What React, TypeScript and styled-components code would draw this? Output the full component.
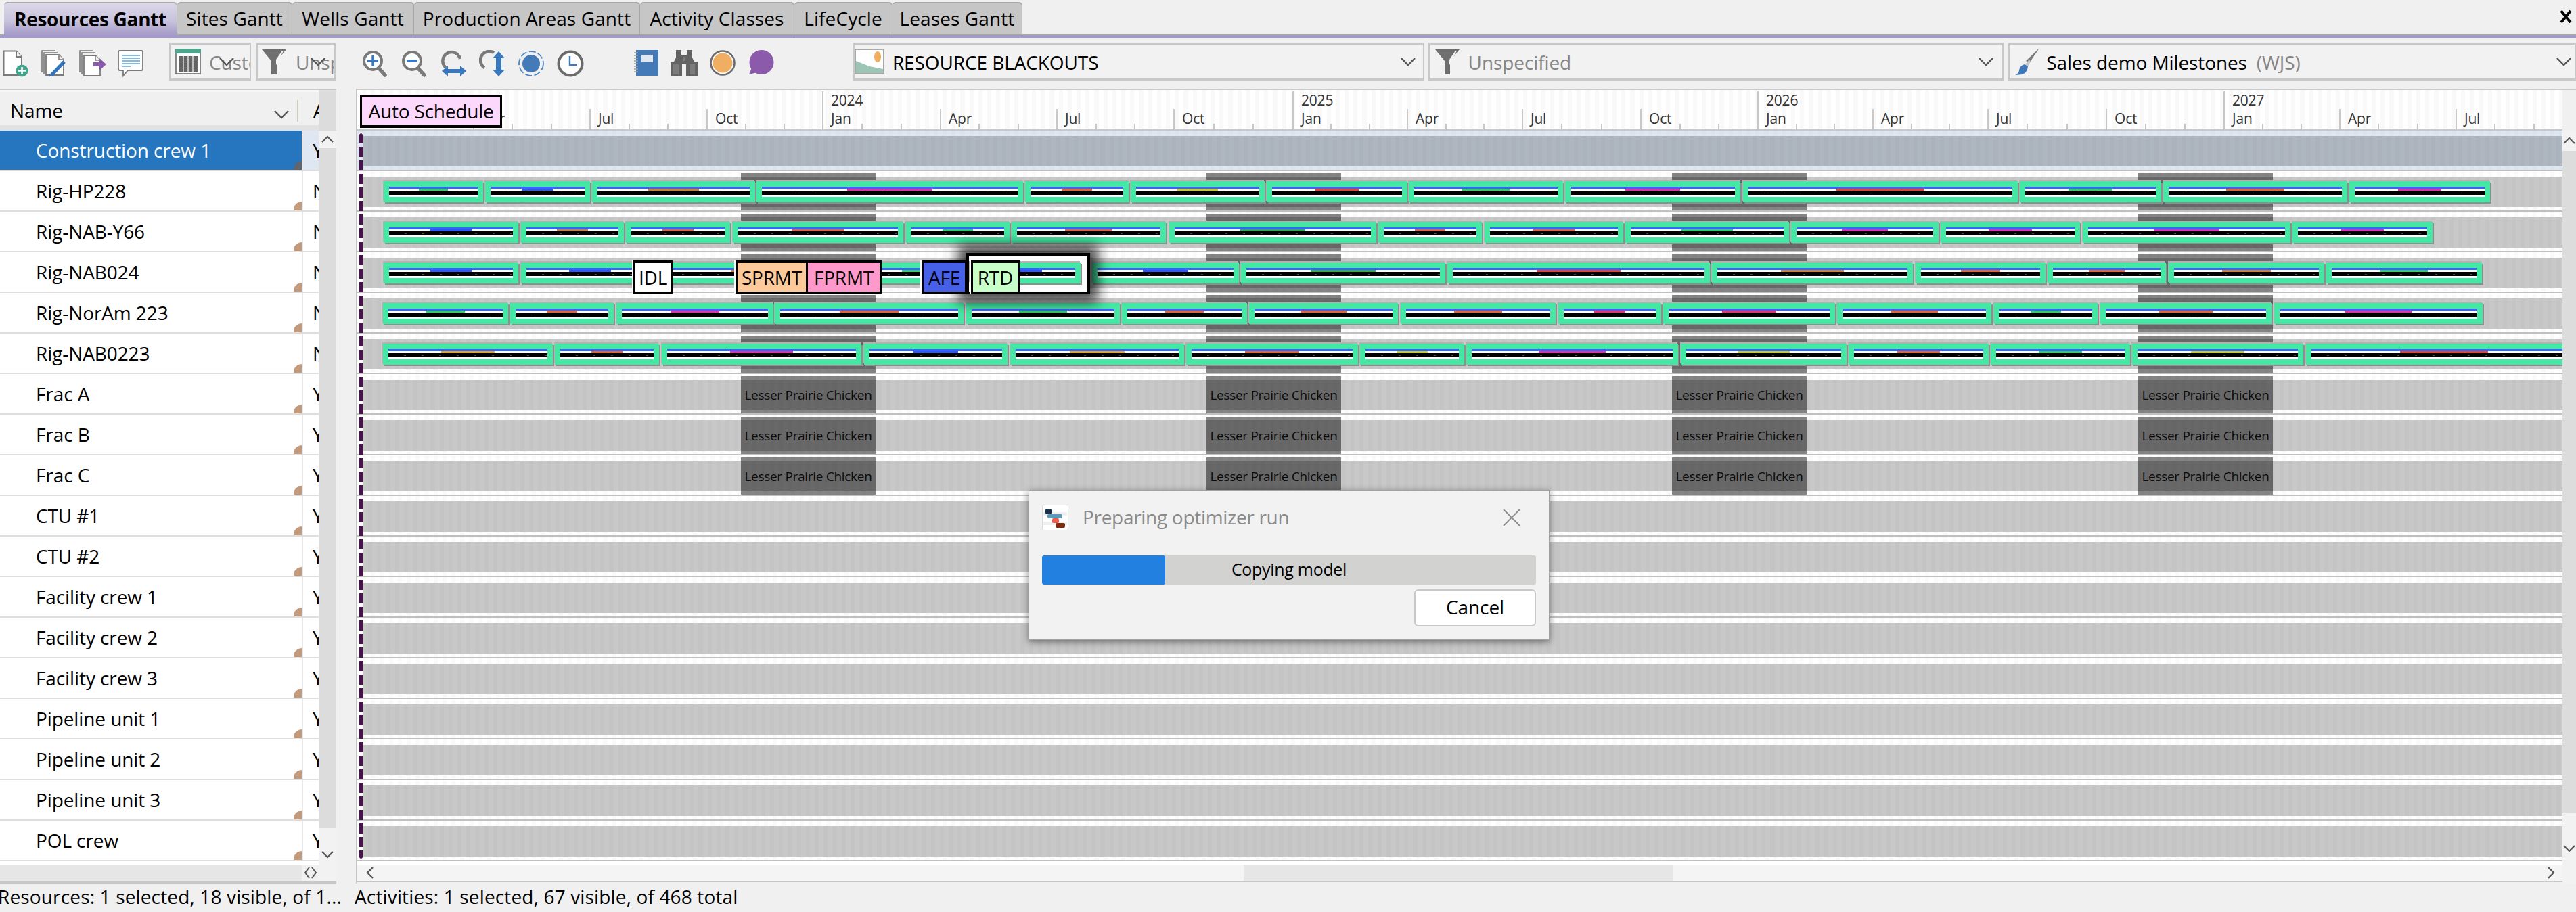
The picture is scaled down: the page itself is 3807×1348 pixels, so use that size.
import React from 'react';
import styled, { createGlobalStyle } from 'styled-components';

const Global = createGlobalStyle`
  html, body { margin: 0; padding: 0; background: #f0f0f0; overflow: hidden; }
  * { box-sizing: border-box; }
`;

const FONT = `"Open Sans", "Noto Sans", "Liberation Sans", sans-serif`;
const X0 = 528;

const Page = styled.div`
  position: relative;
  width: 3807px;
  height: 1348px;
  overflow: hidden;
  background: #f0f0f0;
  font-family: ${FONT};
  font-size: 28px;
  letter-spacing: -0.1px;
  color: #000;
  display: flex;
  flex-direction: column;
`;

/* ---------- tabs ---------- */
const TabBar = styled.div`
  height: 56px;
  padding: 3px 0 0 6px;
  display: flex;
  gap: 1px;
  align-items: flex-start;
  border-bottom: 4px solid #a49ac9;
  box-shadow: inset 0 -2px 0 #a8a8a8;
  position: relative;
`;
const Tab = styled.div<{ $w: number; $active?: boolean }>`
  width: ${p => p.$w}px;
  height: ${p => (p.$active ? 49 : 47)}px;
  border-radius: 5px 5px 0 0;
  border-top: 2px solid #a8a8a8;
  background: ${p => (p.$active ? 'linear-gradient(#dcd8e8 0%, #c8c3dc 55%, #a49ac9 100%)' : '#c6c6c6')};
  font-weight: ${p => (p.$active ? 700 : 400)};
  letter-spacing: ${p => (p.$active ? '-0.3px' : '0.1px')};
  display: flex;
  align-items: center;
  justify-content: center;
  white-space: nowrap;
  box-shadow: 1px 0 0 #a8a8a8;
  padding-bottom: 2px;
`;
const CloseAll = styled.svg`
  position: absolute;
  right: 6px;
  top: 15px;
  width: 18px;
  height: 19px;
`;

/* ---------- toolbar ---------- */
const Toolbar = styled.div`
  height: 75px;
  display: flex;
  align-items: flex-start;
  background: #f0f0f0;
`;
const Tool = styled.div<{ $ml: number }>`
  margin: 18px 0 0 ${p => p.$ml}px;
  height: 40px;
  display: flex;
`;
const Combo = styled.div<{ $ml: number; $w: number }>`
  position: relative;
  margin: 7px 0 0 ${p => p.$ml}px;
  width: ${p => p.$w}px;
  height: 57px;
  border: solid #c8c8c8;
  border-width: 3px 2px 4px 3px;
  display: flex;
  align-items: center;
  overflow: hidden;
  white-space: nowrap;
  background: #f2f2f2;
`;
const ComboIcon = styled.div<{ $ml: number }>`
  margin-left: ${p => p.$ml}px;
  display: flex;
  flex: none;
`;
const ComboText = styled.span<{ $ml: number; $muted?: boolean }>`
  margin-left: ${p => p.$ml}px;
  color: ${p => (p.$muted ? '#858585' : '#000')};
  padding-top: 2px;
`;
const ComboChevron = styled.svg<{ $right: number; $top?: number }>`
  position: absolute;
  right: ${p => p.$right}px;
  top: ${p => p.$top ?? 18}px;
  width: 24px;
  height: 14px;
`;

/* ---------- main ---------- */
const Main = styled.div`
  height: 1175px;
  display: grid;
  grid-template-columns: 497px 29px 1fr;
`;
const LeftPanel = styled.div`
  display: grid;
  grid-template-columns: 471px 26px;
  border-top: 2px solid #c8c8c8;
  border-bottom: 4px solid #c8c8c8;
  background: #fff;
`;
const LeftBody = styled.div`
  display: flex;
  flex-direction: column;
`;
const HeaderRow = styled.div`
  position: relative;
  height: 60px;
  flex: none;
  background: #f0f0f0;
  border-top: 3px solid #f8f8f8;
  border-bottom: 8px solid #e2e2e2;
  display: flex;
  align-items: center;
`;
const HeaderName = styled.span`
  margin-left: 15px;
  width: 389px;
  padding-top: 4px;
`;
const HeaderSep = styled.div`
  width: 2px;
  height: 32px;
  margin: 6px 0 0 37px;
  background: #cfcbc0;
`;
const HeaderClip = styled.span`
  margin-left: 22px;
  width: 8px;
  overflow: hidden;
  padding-top: 4px;
`;
const HeaderChevron = styled.svg`
  position: absolute;
  left: 404px;
  top: 26px;
  width: 24px;
  height: 14px;
`;
const NameRow = styled.div`
  height: 60px;
  flex: none;
  display: grid;
  grid-template-columns: 446px 2px 23px;
  border-bottom: 2px solid #dedede;
`;
const NameCell = styled.div<{ $sel?: boolean }>`
  position: relative;
  display: flex;
  align-items: center;
  padding-left: 53px;
  color: ${p => (p.$sel ? '#fff' : '#000')};
  background: ${p => (p.$sel ? '#2675bf' : '#fff')};
`;
const Corner = styled.i<{ $sel?: boolean }>`
  position: absolute;
  right: 0;
  bottom: 0;
  width: 12px;
  height: 13px;
  border-radius: 12px 0 0 0;
  background: ${p => (p.$sel ? '#5f6670' : '#c49a7c')};
`;
const ColRule = styled.div`
  background: #e8e8e8;
`;
const FlagCell = styled.div<{ $sel?: boolean }>`
  display: flex;
  align-items: center;
  overflow: hidden;
  padding-left: 14px;
  background: ${p => (p.$sel ? '#dfe8f2' : '#fff')};
`;
const LeftSpacer = styled.div`
  height: 5px;
  flex: none;
`;
const LeftFooter = styled.div`
  height: 24px;
  flex: none;
  display: flex;
  justify-content: flex-end;
  background: #e6e6e6;
`;
const FooterArrows = styled.div`
  width: 25px;
  background: #f0f0f0;
  display: flex;
  align-items: center;
  justify-content: center;
`;

const VScroll = styled.div`
  display: flex;
  flex-direction: column;
  background: #f2f2f2;
`;
const VHead = styled.div<{ $bg: string }>`
  height: 60px;
  flex: none;
  background: ${p => p.$bg};
`;
const VBtn = styled.div<{ $h: number }>`
  height: ${p => p.$h}px;
  flex: none;
  display: flex;
  align-items: center;
  justify-content: center;
  background: #f2f2f2;
`;
const VThumb = styled.div`
  flex: 1;
  background: #dcdcdc;
`;

const Gap = styled.div`
  background: #f0f0f0;
`;

const RightPanel = styled.div`
  display: grid;
  grid-template-columns: 1fr 20px;
  border-left: 2px solid #c8c8c8;
  border-top: 2px solid #c8c8c8;
`;
const ChartCol = styled.div`
  display: flex;
  flex-direction: column;
  min-width: 0;
`;
const Timeline = styled.div`
  position: relative;
  height: 60px;
  flex: none;
  background: #fff repeating-linear-gradient(90deg, transparent 0 7px, rgba(0, 0, 0, 0.025) 7px 13.2px);
  border-bottom: 2px solid #c8c8c8;
  overflow: hidden;
`;
const Tick = styled.i<{ $k: 'y' | 'q' | 'm' }>`
  position: absolute;
  width: 2px;
  background: #c8c8c8;
  bottom: 0;
  height: ${p => (p.$k === 'y' ? 56 : p.$k === 'q' ? 30 : 8)}px;
`;
const TimeLabel = styled.span<{ $year?: boolean }>`
  position: absolute;
  top: ${p => (p.$year ? 0 : 27)}px;
  font-size: 21px;
  line-height: 30px;
  letter-spacing: -0.2px;
  color: #333;
`;
const AutoBtn = styled.div`
  position: absolute;
  left: ${532 - X0}px;
  top: 7px;
  width: 210px;
  height: 49px;
  border: 3px solid #000;
  border-bottom-width: 4px;
  background: #fcd9fc;
  display: flex;
  align-items: center;
  justify-content: center;
  letter-spacing: -0.2px;
  white-space: nowrap;
  z-index: 5;
`;

const Canvas = styled.div`
  position: relative;
  height: 1080px;
  flex: none;
  overflow: hidden;
  background: #fff;
`;
const GanttRow = styled.div<{ $sel?: boolean }>`
  position: relative;
  height: 60px;
  background: ${p => (p.$sel ? '#dfe8f2' : '#fff')}
    repeating-linear-gradient(90deg, transparent 0 7px, rgba(0, 0, 0, 0.02) 7px 13.2px);
  border-bottom: 2px solid #c0c0c0;
`;
const Band = styled.div<{ $sel?: boolean }>`
  position: absolute;
  left: 9px;
  right: 0;
  top: 8px;
  height: 45px;
  background: ${p => (p.$sel ? '#aeb6c0' : '#c8c8c8')}
    repeating-linear-gradient(90deg, transparent 0 7px, rgba(0, 0, 0, 0.018) 7px 13.2px);
`;
const Blackout = styled.div`
  position: absolute;
  top: 3px;
  height: 55px;
  background: rgba(0, 0, 0, 0.48);
  display: flex;
  align-items: center;
  justify-content: center;
  font-size: 19px;
  letter-spacing: -0.3px;
  color: #0a0a0a;
  white-space: nowrap;
`;
const Bar = styled.div<{ $top?: boolean }>`
  position: absolute;
  top: 15px;
  height: 31px;
  padding: 8px 8px 0;
  background: #44e8a4;
  box-shadow: -1px -2px 0 #b2b2b2, 2px 2px 0 #8e8e8e;
  z-index: ${p => (p.$top ? 3 : 'auto')};
`;
const BlueStrip = styled.div`
  height: 3px;
  background: #3366ff;
`;
const MidStrip = styled.div<{ $c: string }>`
  height: 3px;
  background: linear-gradient(90deg, #fff 33.3%, ${p => p.$c} 33.3%, ${p => p.$c} 66.7%, #fff 66.7%);
`;
const BlackStrip = styled.div`
  height: 6px;
  background: repeating-linear-gradient(90deg, transparent 0 23px, #46523f 23px 26px) 0 3px / 100% 1px no-repeat, #000;
`;
const WhiteStrip = styled.div`
  height: 3px;
  background: #fff;
`;
const Milestone = styled.div<{ $bg: string; $plain?: boolean }>`
  position: absolute;
  top: 12px;
  height: 49px;
  border: 3px solid #000;
  background: ${p => p.$bg};
  box-shadow: ${p => (p.$plain ? 'none' : '-2px 0 0 #fff')};
  display: flex;
  align-items: center;
  justify-content: center;
  z-index: 4;
  white-space: nowrap;
  letter-spacing: -0.2px;
`;
const SelectBox = styled.div`
  position: absolute;
  top: 1px;
  height: 61px;
  background: rgba(255, 255, 255, 0.93);
  border: 4px solid #000;
  box-shadow: 0 0 18px 12px rgba(0, 0, 0, 0.72);
  z-index: 2;
`;
const TodayLine = styled.div`
  position: absolute;
  left: 3px;
  top: 4px;
  bottom: 4px;
  width: 5px;
  background: repeating-linear-gradient(#4b1050 0 15px, transparent 15px 20px);
  outline: 1px solid rgba(255, 255, 255, 0.6);
  border-radius: 3px;
  z-index: 6;
`;
const CanvasEnd = styled.div`
  height: 5px;
  flex: none;
  background: #fff;
`;
const HScroll = styled.div`
  position: relative;
  height: 24px;
  flex: none;
  background: #f4f4f4;
  border-bottom: 0;
`;
const HThumb = styled.div`
  position: absolute;
  left: ${1838 - X0}px;
  width: 634px;
  top: 0;
  bottom: 0;
  background: #e6e6e6;
`;
const HArrow = styled.svg<{ $right?: boolean }>`
  position: absolute;
  top: 3px;
  width: 12px;
  height: 18px;
  ${p => (p.$right ? 'right: 11px;' : 'left: 13px;')}
`;
const HRule = styled.div`
  height: 2px;
  flex: none;
  background: #c8c8c8;
`;

const StatusBar = styled.div`
  flex: 1;
  display: grid;
  grid-template-columns: 527px 1fr;
  align-items: center;
  padding-bottom: 4px;
  letter-spacing: 0.15px;
`;
const StatusText = styled.div`
  white-space: nowrap;
  overflow: hidden;
  margin-left: -3px;
`;

/* ---------- dialog ---------- */
const Dialog = styled.div`
  position: absolute;
  left: 1520px;
  top: 724px;
  width: 770px;
  height: 222px;
  background: #f2f2f2;
  border: 1px solid #a0a0a0;
  box-shadow: 0 3px 10px rgba(0, 0, 0, 0.45);
  padding: 20px 19px 0;
  z-index: 10;
  display: flex;
  flex-direction: column;
`;
const DialogHead = styled.div`
  display: flex;
  align-items: center;
  height: 40px;
`;
const DialogTitle = styled.span`
  flex: 1;
  margin-left: 21px;
  color: #8a8a8a;
  letter-spacing: -0.3px;
  padding-bottom: 2px;
`;
const DialogClose = styled.svg`
  width: 30px;
  height: 30px;
  margin-right: 21px;
`;
const Progress = styled.div`
  position: relative;
  margin-top: 36px;
  height: 43px;
  border-radius: 3px;
  background: #d2d2d0;
  display: flex;
  align-items: center;
  justify-content: center;
  font-size: 25px;
  letter-spacing: -0.3px;
  padding-bottom: 3px;
  overflow: hidden;
`;
const ProgressFill = styled.div`
  position: absolute;
  left: 0;
  top: 0;
  bottom: 0;
  width: 182px;
  background: #2180e0;
  border-radius: 3px;
`;
const ProgressText = styled.span`
  position: relative;
`;
const DialogFoot = styled.div`
  display: flex;
  justify-content: flex-end;
  margin-top: 7px;
`;
const CancelBtn = styled.div`
  width: 180px;
  height: 55px;
  background: #fff;
  border: 2px solid #c8c8c8;
  border-radius: 6px;
  display: flex;
  align-items: center;
  justify-content: center;
  padding-bottom: 3px;
`;

/* ---------- icons ---------- */
const G = '#7a7a7a';

const Chevron = () => <polyline points="2,2 12,12 22,2" fill="none" stroke="#555" strokeWidth="2.4" />;

const IconNew = () => (
  <svg width="38" height="40" viewBox="0 0 38 40">
    <path d="M1.5 1.5H20L28 10V37H1.5Z" fill="#fff" stroke={G} strokeWidth="2" />
    <path d="M20 1.5V10H28" fill="#f0f0f0" stroke={G} strokeWidth="2" />
    <circle cx="28.5" cy="30.5" r="9" fill="#3fa58a" />
    <path d="M28.5 25V36M23 30.5H34" stroke="#fff" strokeWidth="2.6" />
  </svg>
);
const IconEdit = () => (
  <svg width="38" height="40" viewBox="0 0 38 40">
    <path d="M1 33V1H21" fill="none" stroke={G} strokeWidth="1.6" />
    <path d="M4 36V4H24" fill="none" stroke={G} strokeWidth="1.6" />
    <path d="M7 37V7H26L33 14V37Z" fill="#fff" stroke={G} strokeWidth="1.8" />
    <path d="M26 7V14H33" fill="#eee" stroke={G} strokeWidth="1.6" />
    <path d="M34 17L15 37" stroke="#2e75c0" strokeWidth="5" />
    <path d="M15 37L11 40L12 36Z" fill="#2e75c0" />
  </svg>
);
const IconSend = () => (
  <svg width="40" height="40" viewBox="0 0 40 40">
    <path d="M1 33V1H20" fill="none" stroke={G} strokeWidth="1.6" />
    <path d="M4 36V4H23" fill="none" stroke={G} strokeWidth="1.6" />
    <path d="M7 38V8H24L31 15V38Z" fill="#fff" stroke={G} strokeWidth="1.8" />
    <path d="M24 8V15H31" fill="#eee" stroke={G} strokeWidth="1.6" />
    <path d="M21 18H30V12L40 21L30 30V24H21Z" fill="#8a5aa8" />
  </svg>
);
const IconComment = () => (
  <svg width="38" height="40" viewBox="0 0 38 40">
    <path d="M3 1H35Q37 1 37 3V28Q37 30 35 30H15L8 38V30H3Q1 30 1 28V3Q1 1 3 1Z" fill="#fff" stroke={G} strokeWidth="1.8" />
    <path d="M6 8H33M6 12H33M6 16H33M6 20H33M6 24H19" stroke="#5ba5d8" strokeWidth="1.7" />
  </svg>
);
const IconTable = () => (
  <svg width="38" height="38" viewBox="0 0 38 38">
    <rect x="1" y="1" width="36" height="36" fill="#fff" stroke={G} strokeWidth="1.8" />
    <rect x="0" y="0" width="38" height="7" fill="#4fa58c" />
    <path d="M5 12H33M5 15H33M5 18H33M5 21H33M5 24H33M5 27H33M5 30H33M5 33H33" stroke="#333" strokeWidth="1.4" />
    <path d="M12 10V34M19 10V34M26 10V34" stroke="#fff" strokeWidth="1.2" />
  </svg>
);
const IconFunnel = () => (
  <svg width="36" height="38" viewBox="0 0 36 38">
    <path d="M0 1H36L22 18V38H14V18Z" fill="#6f6f6f" />
    <path d="M30 3L21 16V24L32 3Z" fill="#f4f4f4" />
  </svg>
);
const Lens = ({ inner }: { inner: React.ReactNode }) => (
  <svg width="37" height="40" viewBox="0 0 37 40">
    <circle cx="15" cy="16" r="13" fill="#fff" stroke={G} strokeWidth="4" />
    <path d="M24 27L33 37" stroke={G} strokeWidth="5.5" strokeLinecap="round" />
    {inner}
  </svg>
);
const IconFitH = () => (
  <svg width="40" height="40" viewBox="0 0 40 40">
    <path d="M8 26A13 13 0 1 1 29 13" fill="none" stroke={G} strokeWidth="4.5" />
    <path d="M2 31L11 23V28H29V23L38 31L29 39V34H11V39Z" fill="#3a78bd" />
  </svg>
);
const IconFitV = () => (
  <svg width="40" height="40" viewBox="0 0 40 40">
    <path d="M8 26A13 13 0 1 1 22 4" fill="none" stroke={G} strokeWidth="4.5" />
    <path d="M29 2L38 12H33V29H38L29 39L20 29H25V12H20Z" fill="#3a78bd" />
  </svg>
);
const IconTarget = () => (
  <svg width="40" height="40" viewBox="0 0 40 40">
    <circle cx="20" cy="20" r="18" fill="none" stroke="#4a86c0" strokeWidth="1.8" strokeDasharray="10 3.5" />
    <circle cx="20" cy="20" r="13" fill="#457ab8" />
  </svg>
);
const IconClock = () => (
  <svg width="40" height="40" viewBox="0 0 40 40">
    <circle cx="20" cy="20" r="17.5" fill="#fff" stroke="#6a6a6a" strokeWidth="4" />
    <path d="M19 9V22H30" fill="none" stroke="#3f78b8" strokeWidth="2.4" />
  </svg>
);
const IconNotebook = () => (
  <svg width="36" height="38" viewBox="0 0 36 38">
    <rect x="3" y="0" width="33" height="38" fill="#457ab8" />
    <rect x="11" y="7" width="17" height="11" fill="#dfe8f2" />
    <path d="M0 4H6M0 8H6M0 12H6M0 16H6M0 20H6M0 24H6M0 28H6M0 32H6" stroke="#9a9a9a" strokeWidth="1.6" />
  </svg>
);
const IconBinoculars = () => (
  <svg width="40" height="38" viewBox="0 0 40 38">
    <path d="M8 0H16V7H24V0H32V11L35 17H40V38H23V21H17V38H0V17H5L8 11Z" fill="#636363" />
    <path d="M4 21H12V36H4ZM28 21H36V36H28ZM18 10H22V16H18Z" fill="#7c7c7c" />
  </svg>
);
const IconOrange = () => (
  <svg width="38" height="38" viewBox="0 0 38 38">
    <circle cx="19" cy="19" r="17.5" fill="#fff" stroke="#6a6a6a" strokeWidth="2.6" />
    <circle cx="19" cy="19" r="14.5" fill="#f0ae62" />
  </svg>
);
const IconBubble = () => (
  <svg width="40" height="38" viewBox="0 0 40 38">
    <circle cx="20.5" cy="18" r="18" fill="#8c5aaa" />
    <path d="M2 36L6 26L14 33Z" fill="#8c5aaa" />
  </svg>
);
const IconPicture = () => (
  <svg width="44" height="38" viewBox="0 0 44 38">
    <rect x="1" y="1" width="42" height="36" fill="#fff" stroke="#a8a8a8" strokeWidth="2" />
    <ellipse cx="34" cy="12" rx="5" ry="8" fill="#f0ae62" />
    <path d="M2 18L22 26L42 30V36H2Z" fill="#9cc5b6" />
  </svg>
);
const IconBrush = () => (
  <svg width="38" height="40" viewBox="0 0 38 40">
    <path d="M37 0L22 22L17 19Z" fill="#7a7a7a" />
    <path d="M22 17L16 24L20 27L24 20Z" fill="#c8c8c8" />
    <path d="M15 24L20 27Q19 36 12 39L1 40Q7 38 7 33Q8 26 15 24Z" fill="#3f78b8" />
  </svg>
);
const IconGanttApp = () => (
  <svg width="39" height="38" viewBox="0 0 39 38">
    <rect x="0.5" y="0.5" width="38" height="37" rx="2" fill="#fff" stroke="#dcdcdc" />
    <rect x="2" y="11" width="35" height="5" fill="#f0f0f0" />
    <rect x="2" y="25" width="35" height="5" fill="#f0f0f0" />
    <rect x="4" y="7" width="11" height="6" rx="2" fill="#14304c" />
    <rect x="8" y="14" width="22" height="6" rx="2" fill="#5b9ab8" />
    <rect x="15" y="20" width="10" height="7" rx="2" fill="#ef5a4c" />
    <rect x="20" y="27" width="14" height="7" rx="2" fill="#7e2a0e" />
  </svg>
);

/* ---------- data ---------- */
const C = {
  green: '#33cc66', dkgreen: '#33aa44', blue: '#3355e8', orange: '#cc8033', ored: '#e0663a',
  magenta: '#dd33aa', olive: '#c4cc33', red: '#e04433', crimson: '#e6336a', gold: '#dda533',
};
type B3 = [number, number, string];

const barsByRow: Record<number, B3[]> = {
  1: [
    [567, 714, C.green], [717, 872, C.blue], [875, 1116, C.orange], [1118, 1512, C.magenta], [1515, 1668, C.ored],
    [1671, 1869, C.olive], [1872, 2080, C.red], [2082, 2310, C.green], [2313, 2572, C.magenta], [2576, 2982, C.red],
    [2985, 3194, C.green], [3197, 3469, C.ored], [3472, 3680, C.magenta],
  ],
  2: [
    [567, 766, C.blue], [770, 922, C.orange], [925, 1079, C.ored], [1083, 1335, C.ored], [1339, 1492, C.green],
    [1495, 1723, C.ored], [1728, 2034, C.dkgreen], [2037, 2190, C.ored], [2194, 2399, C.ored], [2402, 2644, C.green],
    [2647, 2865, C.magenta], [2868, 3074, C.magenta], [3078, 3385, C.magenta], [3388, 3595, C.magenta],
  ],
  3: [
    [567, 766, C.blue], [770, 974, C.blue], [977, 1278, C.orange], [1281, 1428, C.green],
    [1614, 1831, C.blue], [1834, 2136, C.dkgreen], [2139, 2527, C.red], [2530, 2827, C.orange],
    [2831, 3023, C.ored], [3026, 3201, C.ored], [3205, 3435, C.orange], [3438, 3668, C.green],
  ],
  4: [
    [566, 751, C.green], [754, 907, C.ored], [911, 1143, C.magenta], [1145, 1424, C.ored], [1428, 1655, C.green],
    [1658, 1843, C.ored], [1846, 2066, C.ored], [2070, 2299, C.ored], [2303, 2455, C.crimson], [2458, 2712, C.crimson],
    [2715, 2943, C.ored], [2947, 3100, C.green], [3104, 3357, C.ored], [3361, 3669, C.magenta],
  ],
  5: [
    [566, 817, C.gold], [820, 974, C.ored], [978, 1273, C.magenta], [1277, 1489, C.blue], [1493, 1750, C.gold],
    [1753, 2007, C.ored], [2010, 2164, C.olive], [2167, 2480, C.magenta], [2484, 2729, C.olive], [2732, 2939, C.ored],
    [2942, 3148, C.green], [3151, 3404, C.olive], [3408, 3816, C.red],
  ],
};

const resources: [string, string][] = [
  ['Construction crew 1', 'Y'], ['Rig-HP228', 'N'], ['Rig-NAB-Y66', 'N'], ['Rig-NAB024', 'N'], ['Rig-NorAm 223', 'N'],
  ['Rig-NAB0223', 'N'], ['Frac A', 'Y'], ['Frac B', 'Y'], ['Frac C', 'Y'], ['CTU #1', 'Y'], ['CTU #2', 'Y'],
  ['Facility crew 1', 'Y'], ['Facility crew 2', 'Y'], ['Facility crew 3', 'Y'], ['Pipeline unit 1', 'Y'],
  ['Pipeline unit 2', 'Y'], ['Pipeline unit 3', 'Y'], ['POL crew', 'Y'],
];

const blackouts: [number, number][] = [[1095, 1294], [1783, 1982], [2471, 2670], [3160, 3359]];

const quarters: [number, string, string?][] = [
  [699, 'Apr'], [871, 'Jul'], [1044, 'Oct'], [1215, 'Jan', '2024'], [1389, 'Apr'], [1561, 'Jul'], [1734, 'Oct'],
  [1910, 'Jan', '2025'], [2079, 'Apr'], [2249, 'Jul'], [2424, 'Oct'], [2597, 'Jan', '2026'], [2767, 'Apr'],
  [2937, 'Jul'], [3112, 'Oct'], [3286, 'Jan', '2027'], [3457, 'Apr'], [3629, 'Jul'],
];

const milestones: [number, number, string, string, boolean?][] = [
  [936, 994, '#ffffff', 'IDL'],
  [1087, 1194, '#fbc99a', 'SPRMT'],
  [1191, 1303, '#ff99cc', 'FPRMT', true],
  [1362, 1429, '#4660e8', 'AFE'],
  [1435, 1507, '#c8ffc8', 'RTD'],
];

const tabs: [string, number, boolean?][] = [
  ['Resources Gantt', 255, true], ['Sites Gantt', 169], ['Wells Gantt', 179], ['Production Areas Gantt', 333],
  ['Activity Classes', 227], ['LifeCycle', 144], ['Leases Gantt', 191],
];

const ActivityBar = ({ b, top }: { b: B3; top?: boolean }) => (
  <Bar $top={top} style={{ left: b[0] - X0, width: b[1] - b[0] }}>
    <BlueStrip />
    <MidStrip $c={b[2]} />
    <BlackStrip />
    <WhiteStrip />
  </Bar>
);

const ArrowUp = () => (
  <svg width="20" height="12" viewBox="0 0 20 12"><polyline points="2,10 10,2 18,10" fill="none" stroke="#555" strokeWidth="2.2" /></svg>
);
const ArrowDown = () => (
  <svg width="20" height="12" viewBox="0 0 20 12"><polyline points="2,2 10,10 18,2" fill="none" stroke="#555" strokeWidth="2.2" /></svg>
);

export default function App() {
  return (
    <Page>
      <Global />
      <TabBar>
        {tabs.map(([t, w, a]) => (
          <Tab key={t} $w={w} $active={a}>{t}</Tab>
        ))}
        <CloseAll viewBox="0 0 18 19">
          <path d="M2 1L16 18M16 1L2 18" stroke="#000" strokeWidth="4" />
        </CloseAll>
      </TabBar>

      <Toolbar>
        <Tool $ml={4}><IconNew /></Tool>
        <Tool $ml={19}><IconEdit /></Tool>
        <Tool $ml={18}><IconSend /></Tool>
        <Tool $ml={17}><IconComment /></Tool>
        <Combo $ml={38} $w={121}>
          <ComboIcon $ml={6}><IconTable /></ComboIcon>
          <ComboText $ml={12} $muted>Custom</ComboText>
          <ComboChevron $right={22} viewBox="0 0 24 14"><Chevron /></ComboChevron>
        </Combo>
        <Combo $ml={7} $w={118}>
          <ComboIcon $ml={6}><IconFunnel /></ComboIcon>
          <ComboText $ml={14} $muted>Unspecified</ComboText>
          <ComboChevron $right={12} viewBox="0 0 24 14"><Chevron /></ComboChevron>
        </Combo>
        <Tool $ml={40}><Lens inner={<path d="M15 8V24M7 16H23" stroke="#3a78bd" strokeWidth="3.4" />} /></Tool>
        <Tool $ml={21}><Lens inner={<path d="M7 16H23" stroke="#3a78bd" strokeWidth="4" />} /></Tool>
        <Tool $ml={20}><IconFitH /></Tool>
        <Tool $ml={17}><IconFitV /></Tool>
        <Tool $ml={17}><IconTarget /></Tool>
        <Tool $ml={18}><IconClock /></Tool>
        <Tool $ml={74}><IconNotebook /></Tool>
        <Tool $ml={18}><IconBinoculars /></Tool>
        <Tool $ml={18}><IconOrange /></Tool>
        <Tool $ml={18}><IconBubble /></Tool>
        <Combo $ml={115} $w={845}>
          <ComboIcon $ml={0}><IconPicture /></ComboIcon>
          <ComboText $ml={12}>RESOURCE BLACKOUTS</ComboText>
          <ComboChevron $right={10} viewBox="0 0 24 14"><Chevron /></ComboChevron>
        </Combo>
        <Combo $ml={6} $w={851}>
          <ComboIcon $ml={7}><IconFunnel /></ComboIcon>
          <ComboText $ml={13} $muted>Unspecified</ComboText>
          <ComboChevron $right={12} viewBox="0 0 24 14"><Chevron /></ComboChevron>
        </Combo>
        <Combo $ml={6} $w={840}>
          <ComboIcon $ml={7}><IconBrush /></ComboIcon>
          <ComboText $ml={9}>Sales demo Milestones</ComboText>
          <ComboText $ml={14} $muted>(WJS)</ComboText>
          <ComboChevron $right={4} viewBox="0 0 24 14"><Chevron /></ComboChevron>
        </Combo>
      </Toolbar>

      <Main>
        <LeftPanel>
          <LeftBody>
            <HeaderRow>
              <HeaderName>Name</HeaderName>
              <HeaderSep />
              <HeaderClip>A</HeaderClip>
              <HeaderChevron viewBox="0 0 24 14"><Chevron /></HeaderChevron>
            </HeaderRow>
            {resources.map(([n, f], i) => (
              <NameRow key={n}>
                <NameCell $sel={i === 0}>{n}<Corner $sel={i === 0} /></NameCell>
                <ColRule />
                <FlagCell $sel={i === 0}>{f}</FlagCell>
              </NameRow>
            ))}
            <LeftSpacer />
            <LeftFooter>
              <FooterArrows>
                <svg width="20" height="18" viewBox="0 0 20 18">
                  <path d="M8 1L2 9L8 17M12 1L18 9L12 17" fill="none" stroke="#555" strokeWidth="2" />
                </svg>
              </FooterArrows>
            </LeftFooter>
          </LeftBody>
          <VScroll>
            <VHead $bg="#dcdcdc" />
            <VBtn $h={26}><ArrowUp /></VBtn>
            <VThumb />
            <VBtn $h={78}><ArrowDown /></VBtn>
          </VScroll>
        </LeftPanel>

        <Gap />

        <RightPanel>
          <ChartCol>
            <Timeline>
              {quarters.map(([x, m, y], i) => {
                const next = i < quarters.length - 1 ? quarters[i + 1][0] : x + 172;
                const s = (next - x) / 3;
                return (
                  <React.Fragment key={x}>
                    <Tick $k={y ? 'y' : 'q'} style={{ left: x - X0 }} />
                    <Tick $k="m" style={{ left: x + s - X0 }} />
                    <Tick $k="m" style={{ left: x + 2 * s - X0 }} />
                    <TimeLabel style={{ left: x - X0 + 13 }}>{m}</TimeLabel>
                    {y && <TimeLabel $year style={{ left: x - X0 + 13 }}>{y}</TimeLabel>}
                  </React.Fragment>
                );
              })}
              <AutoBtn>Auto Schedule</AutoBtn>
            </Timeline>
            <Canvas>
              {resources.map(([n], i) => (
                <GanttRow key={n} $sel={i === 0}>
                  <Band $sel={i === 0} />
                  {i >= 1 && i <= 8 && blackouts.map(([a, b]) => (
                    <Blackout key={a} style={{ left: a - X0, width: b - a }}>
                      {i >= 6 ? 'Lesser Prairie Chicken' : null}
                    </Blackout>
                  ))}
                  {(barsByRow[i] || []).map(b => <ActivityBar key={b[0]} b={b} />)}
                  {i === 3 && (
                    <>
                      <SelectBox style={{ left: 1428 - X0, width: 183 }} />
                      <ActivityBar b={[1433, 1597, C.blue]} top />
                      {milestones.map(([a, b, bg, t, plain]) => (
                        <Milestone key={t} $bg={bg} $plain={plain} style={{ left: a - X0, width: b - a }}>{t}</Milestone>
                      ))}
                    </>
                  )}
                </GanttRow>
              ))}
              <TodayLine />
            </Canvas>
            <CanvasEnd />
            <HScroll>
              <HThumb />
              <HArrow viewBox="0 0 12 18"><polyline points="10,1 2,9 10,17" fill="none" stroke="#555" strokeWidth="2.2" /></HArrow>
              <HArrow $right viewBox="0 0 12 18"><polyline points="2,1 10,9 2,17" fill="none" stroke="#555" strokeWidth="2.2" /></HArrow>
            </HScroll>
            <HRule />
          </ChartCol>
          <VScroll>
            <VHead $bg="#f0f0f0" />
            <VBtn $h={30}><ArrowUp /></VBtn>
            <VThumb />
            <VBtn $h={104}><ArrowDown /></VBtn>
          </VScroll>
        </RightPanel>
      </Main>

      <StatusBar>
        <StatusText>Resources: 1 selected, 18 visible, of 1...</StatusText>
        <StatusText>Activities: 1 selected, 67 visible, of 468 total</StatusText>
      </StatusBar>

      <Dialog>
        <DialogHead>
          <IconGanttApp />
          <DialogTitle>Preparing optimizer run</DialogTitle>
          <DialogClose viewBox="0 0 30 30">
            <path d="M3 3L27 27M27 3L3 27" stroke="#8a8a8a" strokeWidth="1.8" />
          </DialogClose>
        </DialogHead>
        <Progress>
          <ProgressFill />
          <ProgressText>Copying model</ProgressText>
        </Progress>
        <DialogFoot>
          <CancelBtn>Cancel</CancelBtn>
        </DialogFoot>
      </Dialog>
    </Page>
  );
}
